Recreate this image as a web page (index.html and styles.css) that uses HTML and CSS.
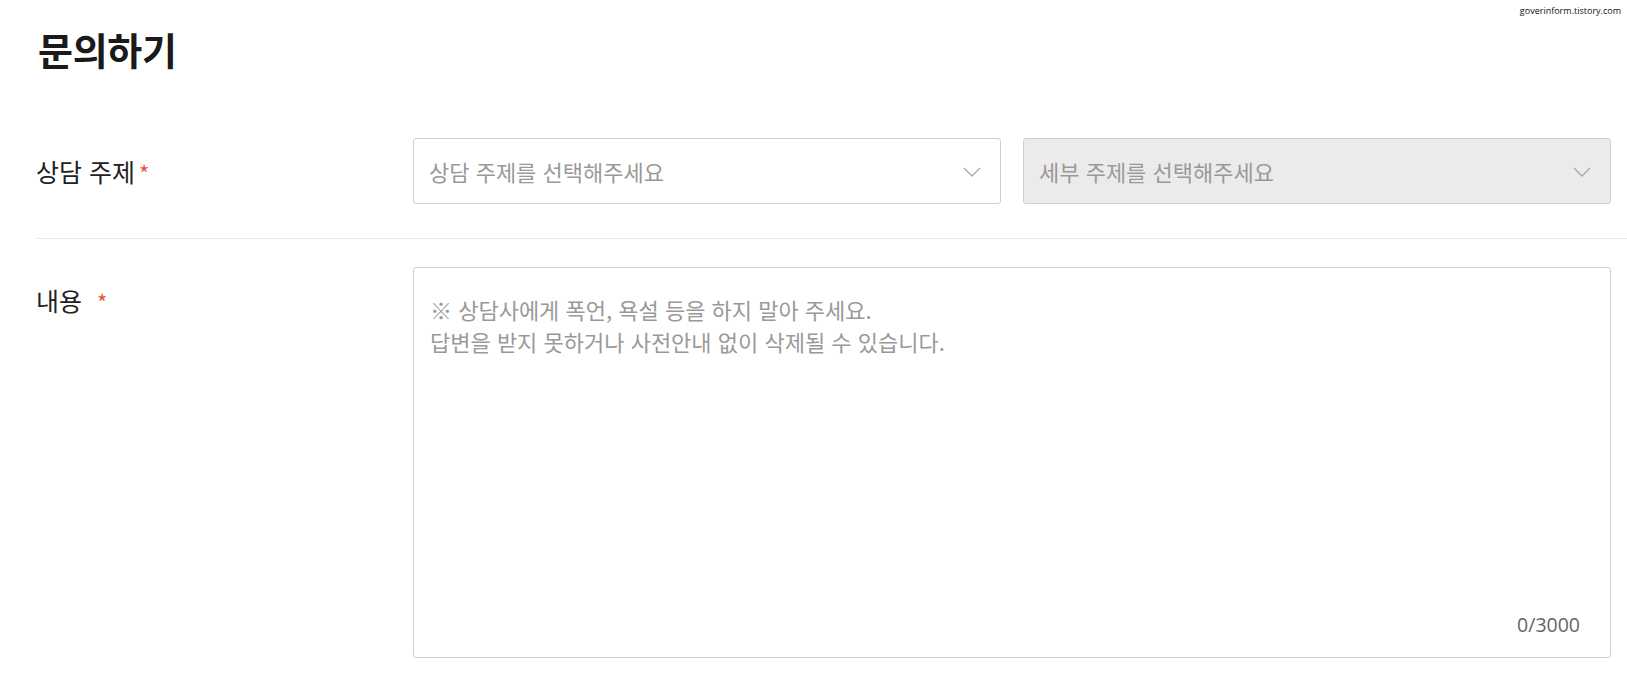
FILE: index.html
```html
<!DOCTYPE html>
<html lang="ko">
<head>
<meta charset="utf-8">
<title>문의하기</title>
<link rel="stylesheet" href="styles.css">
</head>
<body>
<div class="watermark">goverinform.tistory.com</div>
<main class="page">
  <h1 class="title">문의하기</h1>
  <form class="form">
    <div class="row row-topic">
      <div class="label">상담 주제<span class="req">*</span></div>
      <div class="field selects">
        <div class="select">
          <span class="placeholder">상담 주제를 선택해주세요</span>
          <svg class="chev" width="18" height="10" viewBox="0 0 18 10"><path d="M1 1 L9 9 L17 1" fill="none" stroke="#aaa" stroke-width="1.4"/></svg>
        </div>
        <div class="select disabled">
          <span class="placeholder">세부 주제를 선택해주세요</span>
          <svg class="chev" width="18" height="10" viewBox="0 0 18 10"><path d="M1 1 L9 9 L17 1" fill="none" stroke="#aaa" stroke-width="1.4"/></svg>
        </div>
      </div>
    </div>
    <div class="row row-content">
      <div class="label">내용 <span class="req req-gap">*</span></div>
      <div class="field">
        <div class="textarea">
          <p class="ta-placeholder">※ 상담사에게 폭언, 욕설 등을 하지 말아 주세요.<br>답변을 받지 못하거나 사전안내 없이 삭제될 수 있습니다.</p>
          <span class="counter">0/3000</span>
        </div>
      </div>
    </div>
  </form>
</main>
</body>
</html>
```
FILE: styles.css
```css
* { box-sizing: border-box; }
html, body { margin: 0; padding: 0; background: #fff; }
body {
  font-family: "Noto Sans CJK KR", "Noto Sans", sans-serif;
  color: #222;
  position: relative;
}
.watermark {
  position: absolute;
  top: 4px;
  right: 6px;
  font-family: "Open Sans", "Noto Sans", sans-serif;
  font-size: 9px;
  color: #111;
}
.page {
  padding: 21px 0 0 36px;
}
.title {
  margin: 0 0 0 2px;
  font-size: 38px;
  font-weight: 700;
  line-height: 56px;
  color: #1a1a1a;
  letter-spacing: -0.3px;
}
.form { margin-top: 61px; }
.row {
  display: flex;
  align-items: flex-start;
  padding-right: 16px;
}
.row-topic {
  padding-bottom: 33px;
  border-bottom: 1px solid #e6e6e6;
}
.row-content {
  padding-top: 28px;
}
.label {
  width: 377px;
  flex: none;
  font-size: 25px;
  line-height: 66px;
  color: #222;
}
.req { color: #e3573e; margin-left: 4px; font-size: 22px; }
.req-gap { margin-left: 8px; }
.field { flex: 1; }
.selects { display: flex; gap: 22px; }
.select {
  flex: 1;
  height: 66px;
  border: 1px solid #cfcfcf;
  border-radius: 3px;
  display: flex;
  align-items: center;
  justify-content: space-between;
  padding: 0 19px 0 15px;
  background: #fff;
}
.select.disabled { background: #ebebeb; }
.placeholder { font-size: 22px; color: #999; }
.chev { display: block; margin-top: 2px; }
.textarea {
  position: relative;
  height: 391px;
  border: 1px solid #cfcfcf;
  border-radius: 3px;
  padding: 25px 16px;
}
.ta-placeholder {
  margin: 0;
  font-size: 22px;
  line-height: 32px;
  color: #999;
}
.counter {
  position: absolute;
  right: 30px;
  bottom: 19px;
  font-family: "Open Sans", "Noto Sans", sans-serif;
  font-size: 19.5px;
  color: #666;
}
```
